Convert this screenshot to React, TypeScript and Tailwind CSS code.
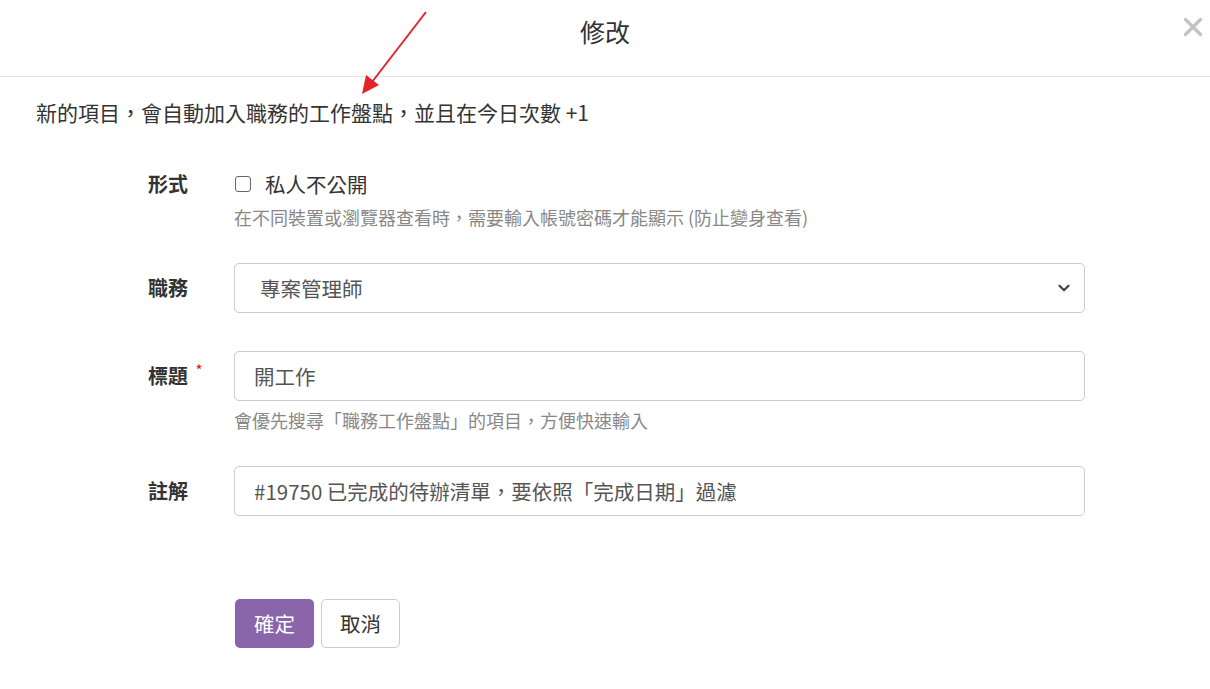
import { ChevronDown, X } from "lucide-react";

const font = { fontFamily: '"Noto Sans CJK TC", "Noto Sans", "Liberation Sans", sans-serif' };

function Label({ text, required, tall }: { text: string; required?: boolean; tall?: boolean }) {
  return (
    <div className={"w-[86px] shrink-0 text-[20px] font-bold text-[#333] flex " + (tall ? "h-[50px] items-center" : "h-[28px] items-center")}>
      <span>{text}</span>
      {required && <span className="ml-[8px] -mt-[14px] text-[12px] leading-none text-[#e02020]">*</span>}
    </div>
  );
}

export default function App() {
  return (
    <div className="relative w-[1210px] h-[689px] bg-white overflow-hidden" style={font}>
      <div className="relative h-[77px] border-b border-[#e5e5e5] flex justify-center">
        <h4 className="mt-[15px] text-[25px] leading-[32px] text-[#333]">修改</h4>
        <X className="absolute right-[2px] top-[12px] w-[30px] h-[30px] text-[#c2c2c2]" strokeWidth={2.6} />
      </div>

      <svg className="absolute left-0 top-0" width="1210" height="120" viewBox="0 0 1210 120">
        <line x1="426" y1="12" x2="372" y2="82" stroke="#e3242b" strokeWidth="2" />
        <polygon points="362,94 366,75 379,85" fill="#e3242b" />
      </svg>

      <p className="pl-[36px] mt-[21px] text-[21px] leading-[28px] text-[#333]">新的項目，會自動加入職務的工作盤點，並且在今日次數 +1</p>

      <div className="pl-[148px] mt-[44px]">
        <div className="flex">
          <Label text="形式" />
          <div>
            <label className="flex items-center gap-[14px] h-[28px] text-[20.5px] text-[#333]">
              <span className="w-[16px] h-[16px] border border-[#666] rounded-[3px] ml-[1px]" />
              私人不公開
            </label>
            <p className="mt-[7px] text-[18px] leading-[24px] text-[#888]">在不同裝置或瀏覽器查看時，需要輸入帳號密碼才能顯示 (防止變身查看)</p>
          </div>
        </div>

        <div className="flex mt-[34px]">
          <Label text="職務" tall />
          <div className="w-[851px] h-[50px] border border-[#ccc] rounded-[5px] flex items-center justify-between pl-[25px] pr-[11px] text-[20.5px] text-[#555]">
            <span>專案管理師</span>
            <ChevronDown className="w-[18px] h-[18px] text-[#444]" strokeWidth={3} />
          </div>
        </div>

        <div className="flex mt-[38px]">
          <Label text="標題" required tall />
          <div className="w-[851px]">
            <div className="h-[50px] border border-[#ccc] rounded-[5px] flex items-center pl-[19px] text-[20.5px] text-[#555]">開工作</div>
            <p className="mt-[7px] text-[18px] leading-[24px] text-[#888]">會優先搜尋「職務工作盤點」的項目，方便快速輸入</p>
          </div>
        </div>

        <div className="flex mt-[34px]">
          <Label text="註解" tall />
          <div className="w-[851px] h-[50px] border border-[#ccc] rounded-[5px] flex items-center pl-[19px] text-[20.5px] text-[#555]">#19750 已完成的待辦清單，要依照「完成日期」過濾</div>
        </div>

        <div className="flex gap-[7px] pl-[87px] mt-[83px]">
          <button className="w-[79px] h-[49px] rounded-[5px] bg-[#8a65a9] text-white text-[20.5px]">確定</button>
          <button className="w-[79px] h-[49px] rounded-[5px] border border-[#ccc] bg-white text-[#333] text-[20.5px]">取消</button>
        </div>
      </div>
    </div>
  );
}
